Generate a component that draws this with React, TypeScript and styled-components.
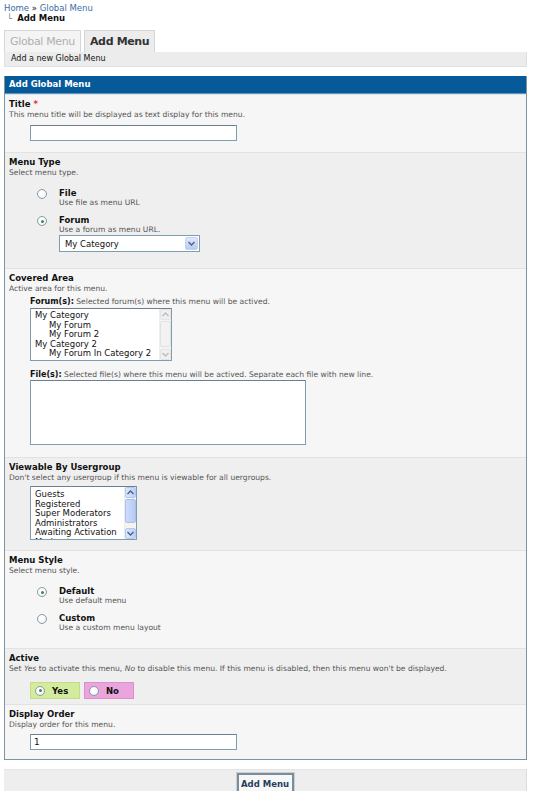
import React from "react"
import styled, { createGlobalStyle, css } from "styled-components"

const Global = createGlobalStyle`
    html, body {
        margin: 0;
        padding: 0;
        background: #fff;
    }
    body {
        font-family: "DejaVu Sans", Verdana, sans-serif;
        color: #111;
    }
`

const Page = styled.div`
    width: 523px;
    padding: 3px 0 0 4px;
`

const Crumbs = styled.div`
    font-size: 8.5px;
    line-height: 10px;

    a {
        color: #3a6ea8;
        text-decoration: none;
    }
`

const CrumbCurrent = styled.div`
    font-size: 8.5px;
    line-height: 10px;
    font-weight: bold;
    padding-left: 3px;
    color: #111;

    span {
        font-weight: normal;
        color: #777;
        margin-right: 5px;
    }
`

const Tabs = styled.div`
    display: flex;
    gap: 3px;
    margin-top: 7px;
    height: 22px;
`

const Tab = styled.div<{ $active?: boolean }>`
    display: flex;
    align-items: center;
    padding: 0 5px;
    font-size: 11px;
    letter-spacing: -0.35px;
    border: 1px solid #d6d6d6;
    border-bottom: none;
    background: #f4f4f4;
    color: #b0b0b0;

    ${p => p.$active && css`
        background: #ececec;
        color: #333;
        font-weight: bold;
    `}
`

const TabDesc = styled.div`
    height: 14px;
    line-height: 14px;
    font-size: 8px;
    padding-left: 6px;
    background: #ececec;
    border: 1px solid #e0e0e0;
    border-top: none;
    color: #111;
`

const Form = styled.div`
    margin-top: 9px;
    border: 1px solid #7b95a5;
    border-top: none;
`

const FormHead = styled.div`
    height: 17px;
    line-height: 17px;
    background: #075a9a;
    border-bottom: 1px solid #5d94c4;
    color: #fff;
    font-size: 8.5px;
    font-weight: bold;
    padding-left: 4px;
`

const Row = styled.div<{ $alt?: boolean; $h: number }>`
    box-sizing: border-box;
    min-height: ${p => p.$h}px;
    padding: 4px 4px 0 4px;
    background: ${p => (p.$alt ? "#efefef" : "#f6f6f6")};
    border-top: 1px solid #e2e2e2;
`

const Label = styled.div`
    font-size: 8.5px;
    line-height: 11px;
    font-weight: bold;
    color: #111;

    em {
        font-style: normal;
        color: #d33;
        margin-left: 3px;
    }
`

const Desc = styled.div`
    font-size: 7.6px;
    line-height: 9px;
    color: #555;
    white-space: nowrap;

    i {
        font-style: italic;
    }
`

const Indent = styled.div<{ $top?: number }>`
    margin-left: 21px;
    margin-top: ${p => p.$top ?? 0}px;
`

const Input = styled.div<{ $w: number }>`
    box-sizing: border-box;
    width: ${p => p.$w}px;
    height: 16px;
    background: #fff;
    border: 1px solid #7f9db0;
    border-top-color: #6d7f8c;
    font-size: 9px;
    line-height: 14px;
    padding-left: 3px;
`

const TextArea = styled.div`
    box-sizing: border-box;
    width: 276px;
    height: 65px;
    background: #fff;
    border: 1px solid #7f9db0;
    border-top-color: #6d7f8c;
`

const Options = styled.div<{ $top: number }>`
    display: flex;
    flex-direction: column;
    gap: 8px;
    margin: ${p => p.$top}px 0 0 28px;
`

const Option = styled.div`
    display: grid;
    grid-template-columns: 10px 1fr;
    column-gap: 12px;
    align-items: start;
`

const Radio = styled.span<{ $on?: boolean }>`
    box-sizing: border-box;
    display: inline-block;
    width: 10px;
    height: 10px;
    margin-top: 1px;
    border-radius: 50%;
    border: 1px solid #8a9aa8;
    background: radial-gradient(circle at 40% 40%, #fff 30%, #e6e9ec 100%);
    position: relative;

    ${p => p.$on && css`
        &::after {
            content: "";
            position: absolute;
            left: 2.5px;
            top: 2.5px;
            width: 3px;
            height: 3px;
            border-radius: 50%;
            background: #3d8a4a;
        }
    `}
`

const OptTitle = styled.div`
    font-size: 8.5px;
    line-height: 10px;
    font-weight: bold;
`

const Select = styled.div`
    box-sizing: border-box;
    display: flex;
    align-items: center;
    justify-content: space-between;
    width: 141px;
    height: 17px;
    margin-top: 1px;
    background: #fff;
    border: 1px solid #7f9db0;
    font-size: 8.5px;
    padding: 0 1px 0 5px;
`

const ArrowBtn = styled.span`
    display: flex;
    align-items: center;
    justify-content: center;
    width: 13px;
    height: 13px;
    background: linear-gradient(#dfe8fb, #b8cbf2);
    border: 1px solid #c3d3f6;
    box-sizing: border-box;
    border-radius: 2px;
`

const ListBox = styled.div<{ $w: number; $h: number }>`
    box-sizing: border-box;
    display: flex;
    width: ${p => p.$w}px;
    height: ${p => p.$h}px;
    margin-top: 1px;
    background: #fff;
    border: 1px solid #7f9db0;
    border-top-color: #6d7f8c;
    overflow: hidden;
`

const ListItems = styled.div<{ $top?: number }>`
    flex: 1;
    padding: ${p => p.$top ?? 2}px 0 0 4px;
    font-size: 8.5px;
    line-height: 9.6px;
    color: #111;
    white-space: nowrap;
    overflow: hidden;
`

const ListItem = styled.div<{ $sub?: boolean }>`
    padding-left: ${p => (p.$sub ? 14 : 0)}px;
`

const ScrollBar = styled.div<{ $blue?: boolean }>`
    display: flex;
    flex-direction: column;
    width: 11px;
    background: #f4f4f0;
    border-left: 1px solid #eee;

    span {
        display: flex;
        align-items: center;
        justify-content: center;
        height: 11px;
        box-sizing: border-box;
        border: 1px solid ${p => (p.$blue ? "#b4c8f2" : "#e4e4e4")};
        background: ${p => (p.$blue ? "linear-gradient(90deg,#dbe6fc,#bdd0f7)" : "#f0f0f0")};
        border-radius: 2px;
    }
`

const Thumb = styled.div<{ $blue?: boolean; $h: number }>`
    height: ${p => p.$h}px;
    margin: 1px 0;
    box-sizing: border-box;
    border: 1px solid ${p => (p.$blue ? "#a9c0ef" : "#e2e2e2")};
    background: ${p => (p.$blue ? "linear-gradient(90deg,#cfdcfa,#b6cbf5)" : "#f2f2f2")};
    border-radius: 2px;
`

const Track = styled.div`
    flex: 1;
`

const SubLabel = styled.div<{ $top?: number }>`
    margin-top: ${p => p.$top ?? 0}px;
    font-size: 7.6px;
    line-height: 10px;
    color: #555;
    white-space: nowrap;

    b {
        font-size: 8px;
        color: #111;
    }
`

const YesNo = styled.div`
    display: flex;
    gap: 4px;
    margin: 9px 0 0 21px;
`

const Choice = styled.div<{ $bg: string; $bd: string }>`
    box-sizing: border-box;
    display: flex;
    align-items: center;
    gap: 7px;
    width: 50px;
    height: 17px;
    padding-left: 4px;
    background: ${p => p.$bg};
    border: 1px solid ${p => p.$bd};
    font-size: 8.5px;
    font-weight: bold;

    ${Radio} {
        margin-top: 0;
    }
`

const Footer = styled.div`
    display: flex;
    justify-content: center;
    margin-top: 9px;
    padding: 3px 0 0;
    height: 22px;
    box-sizing: border-box;
    background: #eeeeee;
    border-top: 1px solid #e4e4e4;
    border-right: 1px solid #dcdcdc;
`

const Button = styled.div`
    box-sizing: border-box;
    height: 21px;
    width: 57px;
    display: flex;
    align-items: center;
    justify-content: center;
    background: #f7f7f7;
    border: 2px solid #7d8d98;
    outline: 1px solid #c7d0d6;
    font-size: 8.5px;
    font-weight: bold;
    color: #1e3e5c;
`

const Down = ({ c = "#4d6185" }: { c?: string }) => (
    <svg width="7" height="5" viewBox="0 0 7 5">
        <path d="M0.5 1 L3.5 4 L6.5 1" fill="none" stroke={c} strokeWidth="1.4" />
    </svg>
)

const Up = ({ c = "#4d6185" }: { c?: string }) => (
    <svg width="7" height="5" viewBox="0 0 7 5">
        <path d="M0.5 4 L3.5 1 L6.5 4" fill="none" stroke={c} strokeWidth="1.4" />
    </svg>
)

const forums = [
    { t: "My Category" },
    { t: "My Forum", sub: true },
    { t: "My Forum 2", sub: true },
    { t: "My Category 2" },
    { t: "My Forum In Category 2", sub: true },
]

const groups = ["Guests", "Registered", "Super Moderators", "Administrators", "Awaiting Activation", "Moderators"]

export default function App() {
    return (
        <Page>
            <Global />
            <Crumbs>
                <a href="#">Home</a> » <a href="#">Global Menu</a>
            </Crumbs>
            <CrumbCurrent>
                <span>└</span>Add Menu
            </CrumbCurrent>

            <Tabs>
                <Tab>Global Menu</Tab>
                <Tab $active>Add Menu</Tab>
            </Tabs>
            <TabDesc>Add a new Global Menu</TabDesc>

            <Form>
                <FormHead>Add Global Menu</FormHead>

                <Row $h={58}>
                    <Label>Title<em>*</em></Label>
                    <Desc>This menu title will be displayed as text display for this menu.</Desc>
                    <Indent $top={6}>
                        <Input $w={207} />
                    </Indent>
                </Row>

                <Row $alt $h={116}>
                    <Label>Menu Type</Label>
                    <Desc>Select menu type.</Desc>
                    <Options $top={11}>
                        <Option>
                            <Radio />
                            <div>
                                <OptTitle>File</OptTitle>
                                <Desc>Use file as menu URL</Desc>
                            </div>
                        </Option>
                        <Option>
                            <Radio $on />
                            <div>
                                <OptTitle>Forum</OptTitle>
                                <Desc>Use a forum as menu URL.</Desc>
                                <Select>
                                    My Category
                                    <ArrowBtn><Down /></ArrowBtn>
                                </Select>
                            </div>
                        </Option>
                    </Options>
                </Row>

                <Row $h={189}>
                    <Label>Covered Area</Label>
                    <Desc>Active area for this menu.</Desc>
                    <Indent $top={4}>
                        <SubLabel><b>Forum(s):</b> Selected forum(s) where this menu will be actived.</SubLabel>
                        <ListBox $w={142} $h={53}>
                            <ListItems>
                                {forums.map(f => (
                                    <ListItem key={f.t} $sub={f.sub}>{f.t}</ListItem>
                                ))}
                            </ListItems>
                            <ScrollBar>
                                <span><Up c="#bbb" /></span>
                                <Thumb $h={26} />
                                <Track />
                                <span><Down c="#bbb" /></span>
                            </ScrollBar>
                        </ListBox>
                        <SubLabel $top={9}>
                            <b>File(s):</b> Selected file(s) where this menu will be actived. Separate each file with new line.
                        </SubLabel>
                        <TextArea />
                    </Indent>
                </Row>

                <Row $alt $h={93}>
                    <Label>Viewable By Usergroup</Label>
                    <Desc>Don't select any usergroup if this menu is viewable for all uergroups.</Desc>
                    <Indent $top={4}>
                        <ListBox $w={107} $h={54}>
                            <ListItems $top={3}>
                                {groups.map(g => (
                                    <ListItem key={g}>{g}</ListItem>
                                ))}
                            </ListItems>
                            <ScrollBar $blue>
                                <span><Up /></span>
                                <Thumb $blue $h={24} />
                                <Track />
                                <span><Down /></span>
                            </ScrollBar>
                        </ListBox>
                    </Indent>
                </Row>

                <Row $h={98}>
                    <Label>Menu Style</Label>
                    <Desc>Select menu style.</Desc>
                    <Options $top={11}>
                        <Option>
                            <Radio $on />
                            <div>
                                <OptTitle>Default</OptTitle>
                                <Desc>Use default menu</Desc>
                            </div>
                        </Option>
                        <Option>
                            <Radio />
                            <div>
                                <OptTitle>Custom</OptTitle>
                                <Desc>Use a custom menu layout</Desc>
                            </div>
                        </Option>
                    </Options>
                </Row>

                <Row $alt $h={56}>
                    <Label>Active</Label>
                    <Desc>
                        Set <i>Yes</i> to activate this menu, <i>No</i> to disable this menu. If this menu is disabled, then this menu won't be displayed.
                    </Desc>
                    <YesNo>
                        <Choice $bg="#d3eb9c" $bd="#c2dc8a">
                            <Radio $on />Yes
                        </Choice>
                        <Choice $bg="#e9a5dc" $bd="#d990cc">
                            <Radio />No
                        </Choice>
                    </YesNo>
                </Row>

                <Row $h={55}>
                    <Label>Display Order</Label>
                    <Desc>Display order for this menu.</Desc>
                    <Indent $top={5}>
                        <Input $w={207}>1</Input>
                    </Indent>
                </Row>
            </Form>

            <Footer>
                <Button>Add Menu</Button>
            </Footer>
        </Page>
    )
}
